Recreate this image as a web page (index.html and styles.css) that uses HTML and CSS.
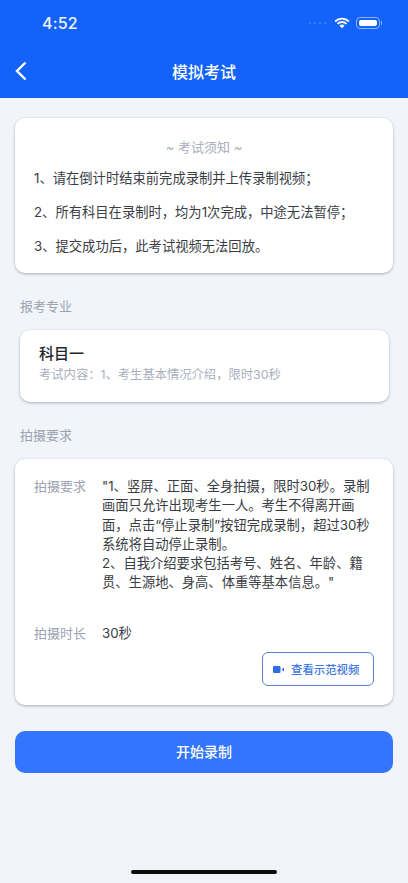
FILE: index.html
```html
<!DOCTYPE html>
<html lang="zh-CN">
<head>
    <meta charset="UTF-8">
    <title>模拟考试</title>
    <link rel="stylesheet" href="styles.css">
</head>
<body>
<div class="page">
    <!-- 顶部 -->
    <div class="header">
        <div class="status">
            <span class="time">4:52</span>
            <div class="status-icons">
                <svg class="signal" width="20" height="4" viewBox="0 0 20 4">
                    <circle cx="2" cy="2" r="1.1"/>
                    <circle cx="7" cy="2" r="1.1"/>
                    <circle cx="12" cy="2" r="1.1"/>
                    <circle cx="17" cy="2" r="1.1"/>
                </svg>
                <svg width="16" height="12" viewBox="0 0 17 12">
                    <path d="M1.2 4.4a10.4 10.4 0 0 1 14.6 0M3.7 6.9a6.800 6.800 0 0 1 9.600 0" fill="none" stroke="#fff" stroke-width="2"/>
                    <path d="M5.900 9a3.600 3.600 0 0 1 5.200 0l-2.600 2.700z" fill="#fff"/>
                </svg>
                <div class="battery"><div class="battery-level"></div></div>
                <div class="battery-nub"></div>
            </div>
        </div>
        <div class="navbar">
            <svg class="back" width="14" height="20" viewBox="0 0 14 20">
                <path d="M11.500 1.500L3 10l8.500 8.500" fill="none" stroke="#fff" stroke-width="2.400"/>
            </svg>
            <h1 class="title">模拟考试</h1>
        </div>
    </div>

    <div class="content">
        <!-- 考试须知 -->
        <div class="card notice">
            <p class="notice-title">~ 考试须知 ~</p>
            <p class="notice-item">1、请在倒计时结束前完成录制并上传录制视频；</p>
            <p class="notice-item">2、所有科目在录制时，均为1次完成，中途无法暂停；</p>
            <p class="notice-item">3、提交成功后，此考试视频无法回放。</p>
        </div>

        <h3 class="label">报考专业</h3>
        <div class="card subject">
            <h4 class="subject-name">科目一</h4>
            <p class="subject-desc">考试内容：1、考生基本情况介绍，限时30秒</p>
        </div>

        <h3 class="label">拍摄要求</h3>
        <div class="card require">
            <div class="row">
                <span class="row-name">拍摄要求</span>
                <p class="row-text">"1、竖屏、正面、全身拍摄，限时30秒。录制画面只允许出现考生一人。考生不得离开画面，点击“停止录制”按钮完成录制，超过30秒系统将自动停止录制。<br>2、自我介绍要求包括考号、姓名、年龄、籍贯、生源地、身高、体重等基本信息。"</p>
            </div>
            <div class="row row-time">
                <span class="row-name">拍摄时长</span>
                <p class="row-text">30秒</p>
            </div>
            <div class="demo-wrap">
                <div class="demo-btn">
                    <svg width="11" height="7" viewBox="0 0 11 7">
                        <rect width="7.500" height="7" rx="1" fill="#2f6fe0"/>
                        <path d="M8.500 3.500L11 1.500v4z" fill="#2f6fe0"/>
                    </svg>
                    <span>查看示范视频</span>
                </div>
            </div>
        </div>

        <div class="start-btn">开始录制</div>
    </div>

    <div class="home-bar"></div>
</div>
</body>
</html>
```

FILE: styles.css
```css
* {
    box-sizing: border-box;
}
html, body {
    margin: 0;
    padding: 0;
}
body {
    background-color: #F1F5FA;
    font-family: Inter, "Noto Sans CJK SC", sans-serif;
}
p, h1, h3, h4 {
    margin: 0;
    font-weight: normal;
}
.page {
    display: flex;
    flex-direction: column;
    height: 883px;
    overflow: hidden;
}
.header {
    height: 98px;
    background-color: #1363FB;
    color: #FFF;
}
.status {
    display: flex;
    justify-content: space-between;
    align-items: center;
    height: 46px;
    padding: 0 26px 0 42px;
}
.time {
    font-size: 16px;
    font-weight: 500;
    letter-spacing: 0.2px;
    color: #F0F5FF;
}
.status-icons {
    display: flex;
    align-items: center;
    gap: 6px;
}
.signal {
    fill: #3F80FC;
}
.battery {
    width: 24px;
    height: 12px;
    padding: 2px;
    border: 1px solid #8DB3FD;
    border-radius: 4px;
}
.battery-level {
    height: 100%;
    background-color: #FFF;
    border-radius: 2px;
}
.battery-nub {
    width: 1px;
    height: 4px;
    margin-left: -5px;
    background-color: #8DB3FD;
}
.navbar {
    position: relative;
    height: 52px;
    display: flex;
    align-items: center;
    justify-content: center;
    padding-bottom: 3px;
}
.back {
    position: absolute;
    left: 14px;
    top: 15px;
}
.title {
    font-size: 16px;
    font-weight: 500;
}
.content {
    padding: 20px 15px 0;
}
.card {
    background-color: #FFF;
    border-radius: 10px;
    box-shadow: 0 1px 3px rgba(70, 80, 100, 0.42);
}
.notice {
    height: 155px;
    padding: 19px 19px 0;
}
.notice-title {
    font-size: 13px;
    line-height: 20px;
    text-align: center;
    color: #A9AFBC;
}
.notice-item {
    font-size: 13.300px;
    line-height: 20px;
    margin-top: 14px;
    color: #3A3D44;
    white-space: nowrap;
}
.notice-title + .notice-item {
    margin-top: 11px;
}
.label {
    font-size: 13px;
    line-height: 20px;
    margin: 23px 0 0 5px;
    color: #9CA2AF;
}
.subject {
    height: 72px;
    margin: 14px 4px 0 5px;
    padding: 14px 19px 0;
}
.subject-name {
    font-size: 15px;
    line-height: 20px;
    font-weight: 500;
    color: #22252B;
}
.subject-desc {
    font-size: 12.300px;
    line-height: 18px;
    margin-top: 2px;
    color: #A9AFBC;
}
.subject + .label {
    margin-top: 23px;
}
.require {
    height: 246px;
    margin-top: 14px;
    padding: 18px 19px 0;
}
.row {
    display: flex;
}
.row-name {
    flex: none;
    width: 68px;
    font-size: 13px;
    line-height: 19.300px;
    color: #9CA2AF;
}
.row-text {
    width: 272px;
    font-size: 13.300px;
    line-height: 19.300px;
    color: #3A3D44;
}
.row-time {
    margin-top: 31px;
}
.demo-wrap {
    display: flex;
    justify-content: flex-end;
    margin-top: 9px;
}
.demo-btn {
    display: flex;
    align-items: center;
    gap: 7px;
    width: 112px;
    height: 34px;
    padding-left: 10px;
    border: 1px solid #5C84C8;
    border-radius: 6px;
    font-size: 11.400px;
    font-weight: 500;
    color: #3C78E4;
}
.start-btn {
    height: 42px;
    margin-top: 26px;
    border-radius: 10px;
    background-color: #3475FD;
    color: #FFF;
    font-size: 14px;
    font-weight: 500;
    line-height: 42px;
    text-align: center;
}
.home-bar {
    width: 146px;
    height: 4px;
    margin: auto auto 9px;
    border-radius: 2px;
    background-color: #0B0B0B;
}
```
